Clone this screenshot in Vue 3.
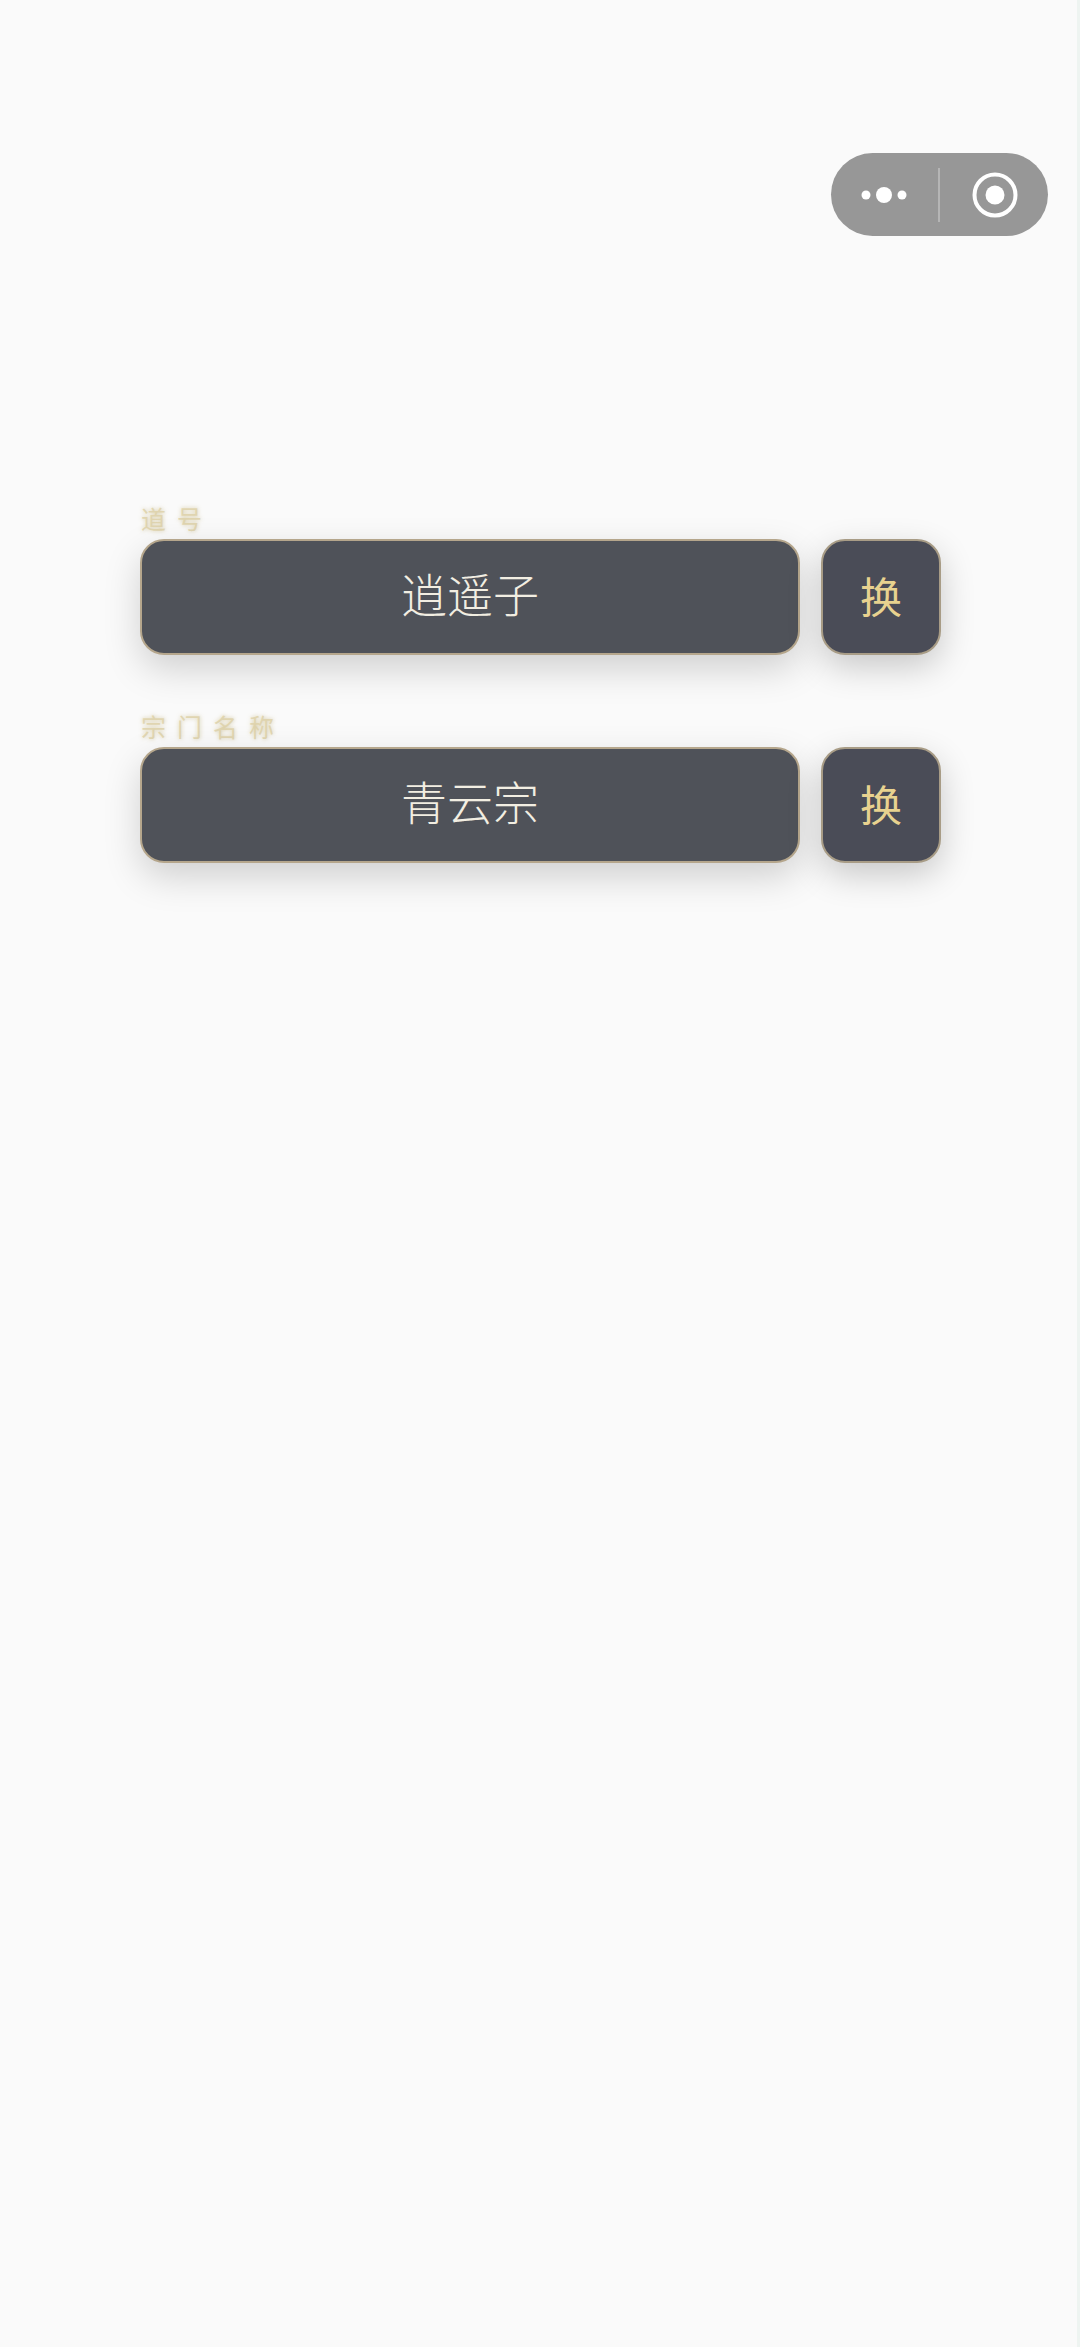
<script setup>
const fields = [
  { label: '道号', value: '逍遥子' },
  { label: '宗门名称', value: '青云宗' }
]
</script>

<template>
  <div class="page">
    <div class="capsule">
      <svg class="more" width="46" height="18" viewBox="0 0 46 18">
        <circle cx="5" cy="9" r="4.5" fill="#fff" />
        <circle cx="23" cy="9" r="8" fill="#fff" />
        <circle cx="41" cy="9" r="4.5" fill="#fff" />
      </svg>
      <span class="divider"></span>
      <svg class="target" width="46" height="46" viewBox="0 0 46 46">
        <circle cx="23" cy="23" r="20.5" fill="none" stroke="#fff" stroke-width="4" />
        <circle cx="23" cy="23" r="9.5" fill="#fff" />
      </svg>
    </div>

    <div class="form">
      <div v-for="field in fields" :key="field.label" class="field">
        <div class="label">{{ field.label }}</div>
        <div class="row">
          <div class="input">{{ field.value }}</div>
          <button class="swap" type="button">换</button>
        </div>
      </div>
    </div>

    <span class="edge"></span>
  </div>
</template>

<style>
html, body {
  margin: 0;
  background: #fafafa;
}
</style>

<style scoped>
.page {
  position: relative;
  height: 2347px;
  box-sizing: border-box;
  padding: 503px 0 0 140px;
  background: #fafafa;
  font-family: "Liberation Serif", "Noto Sans CJK SC", serif;
  overflow: hidden;
}

.edge {
  position: absolute;
  top: 0;
  right: 0;
  width: 3px;
  height: 100%;
  background: #eef4f1;
}

.capsule {
  position: absolute;
  top: 153px;
  left: 831px;
  width: 217px;
  height: 83px;
  border-radius: 42px;
  background: #979797;
  display: flex;
  align-items: center;
}

.more {
  margin-left: 30px;
}

.divider {
  width: 2px;
  height: 54px;
  margin-left: 31px;
  background: #b5b5b5;
}

.target {
  margin-left: 32px;
}

.form {
  display: flex;
  flex-direction: column;
  gap: 56px;
}

.label {
  height: 36px;
  line-height: 36px;
  padding-left: 1px;
  font-size: 25px;
  font-weight: 400;
  letter-spacing: 11px;
  color: rgba(222, 210, 170, 0.85);
  text-shadow: 0 0 4px rgba(205, 190, 140, 0.8);
}

.row {
  display: flex;
  gap: 21px;
}

.input {
  box-sizing: border-box;
  width: 660px;
  height: 116px;
  border: 2px solid #b5a68c;
  border-radius: 24px;
  background: #4f5259;
  color: #f2eee2;
  font-size: 46px;
  font-weight: 300;
  line-height: 112px;
  text-align: center;
  box-shadow: 0 14px 36px rgba(0, 0, 0, 0.17);
}

.swap {
  box-sizing: border-box;
  width: 120px;
  height: 116px;
  padding: 0 0 6px;
  border: 2px solid #a89c86;
  border-radius: 24px;
  background: #4a4c57;
  color: #e8d28f;
  font-family: "Noto Sans CJK SC", sans-serif;
  font-size: 42px;
  font-weight: 400;
  box-shadow: 0 12px 34px rgba(0, 0, 0, 0.2);
}
</style>
